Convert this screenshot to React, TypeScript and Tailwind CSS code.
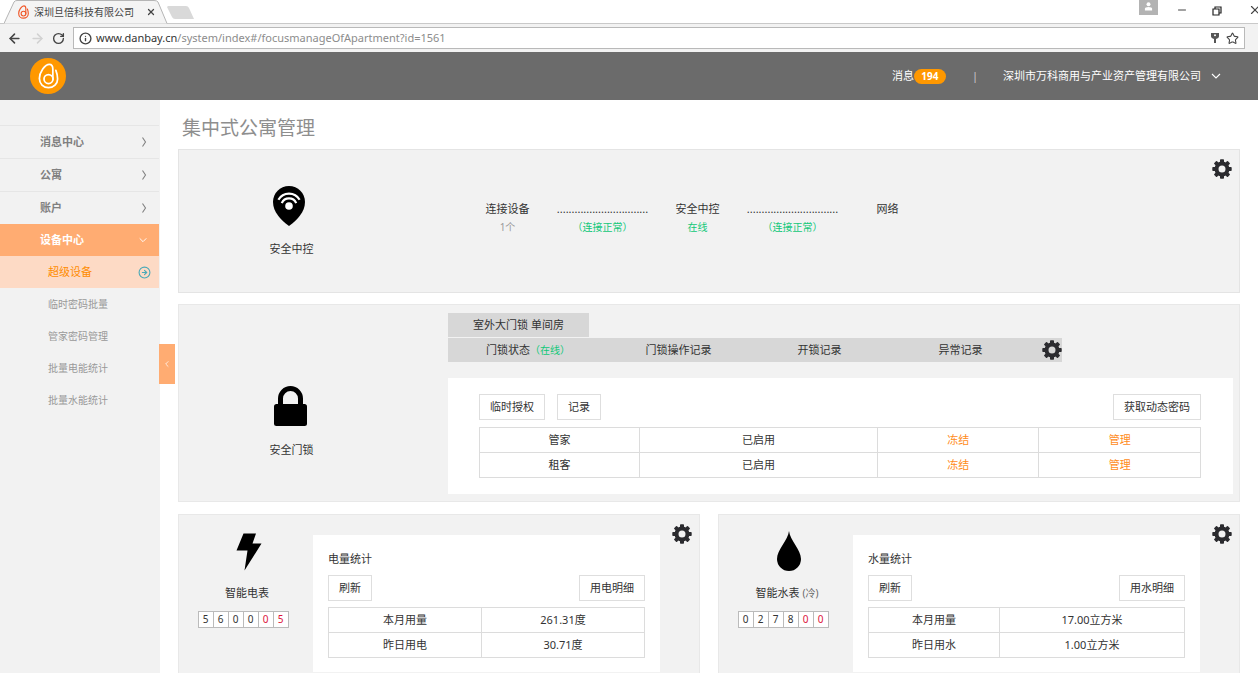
import React from 'react';
import { ArrowLeft, ArrowRight, RotateCw, Info, Star, X, Minus, CircleArrowRight } from 'lucide-react';

const menu = ['消息中心', '公寓', '账户'];
const subMenu = ['临时密码批量', '管家密码管理', '批量电能统计', '批量水能统计'];
const dots = '.'.repeat(31);

const links = [
  { name: '连接设备', note: '1个', ok: false },
  { name: dots, note: '（连接正常）', ok: true },
  { name: '安全中控', note: '在线', ok: true },
  { name: dots, note: '（连接正常）', ok: true },
  { name: '网络', note: '', ok: false },
];

const Logo: React.FC<{ className: string; width: number }> = ({ className, width }) => (
  <svg viewBox="0 0 24 30" className={className} fill="none" stroke="currentColor" strokeWidth={width} strokeLinecap="round">
    <path d="M17 19V7C17 3.500 15.500 1.500 13 1.500C8 1.500 1.500 10.500 1.500 18C1.500 24 6 28.500 12 28.500C18 28.500 22.500 24 22.500 18.500C22.500 14.500 21.500 11 20.500 8.500" />
    <circle cx="12" cy="18.500" r="5.200" />
  </svg>
);

const Gear: React.FC = () => (
  <svg viewBox="0 0 20 20" className="w-5 h-5 text-[#2b2b2f]" fill="currentColor">
    <circle cx="10" cy="10" r="5.500" fill="none" stroke="currentColor" strokeWidth="4" />
    {[0, 45, 90, 135, 180, 225, 270, 315].map((deg) => (
      <rect key={deg} x="8" y="0.300" width="4" height="4" rx="0.800" transform={`rotate(${deg} 10 10)`} />
    ))}
  </svg>
);

const GearButton: React.FC = () => (
  <button aria-label="设置" className="absolute top-[9px] right-[7px]"><Gear /></button>
);

const Chevron: React.FC<{ dir: 'right' | 'down' | 'left'; className: string }> = ({ dir, className }) => {
  const d = { right: 'M4.500 1.500L7.500 6L4.500 10.500', down: 'M2 4L6 8L10 4', left: 'M8 2L4 6L8 10' }[dir];
  return (
    <svg viewBox="0 0 12 12" className={className} fill="none" stroke="currentColor" strokeWidth="1.100"><path d={d} /></svg>
  );
};

const PinIcon: React.FC = () => (
  <svg viewBox="0 0 32 40" className="w-8 h-10">
    <path d="M16 0C7 0 0 7 0 16C0 26 8 34 16 40C24 34 32 26 32 16C32 7 25 0 16 0Z" />
    <circle cx="16" cy="20" r="3.800" fill="#fff" />
    <path d="M8.800 17.200A7.800 7.800 0 0 1 23.200 17.200M5.400 13.800A12.200 12.200 0 0 1 26.600 13.800" fill="none" stroke="#fff" strokeWidth="2.200" />
  </svg>
);

const LockIcon: React.FC = () => (
  <svg viewBox="0 0 33 40" className="w-[33px] h-10">
    <rect y="18" width="33" height="22" rx="2.500" />
    <path d="M6.500 20V12.500A10 10 0 0 1 26.500 12.500V20" fill="none" stroke="#000" strokeWidth="5" />
  </svg>
);

const BoltIcon: React.FC = () => (
  <svg viewBox="0 0 26 40" className="w-[26px] h-10">
    <path d="M7.500 2.500H20L16.500 12.500H25.500L8.500 39.500L11.500 19.500H0.500Z" />
  </svg>
);

const DropIcon: React.FC = () => (
  <svg viewBox="0 0 24 40" className="w-6 h-10">
    <path d="M12 0C11 9 0 19 0 28A12 12 0 0 0 24 28C24 19 13 9 12 0Z" />
  </svg>
);

const Btn: React.FC<{ children: React.ReactNode }> = ({ children }) => (
  <button className="h-[26px] px-[10px] border border-[#dedede] bg-white">{children}</button>
);

const cell = 'border border-[#dcdcdc] text-center p-0';

interface MeterProps {
  icon: React.ReactNode;
  label: React.ReactNode;
  digits: string;
  title: string;
  detail: string;
  rows: string[][];
  split: string;
}

const Meter: React.FC<MeterProps> = ({ icon, label, digits, title, detail, rows, split }) => (
  <section className="relative flex items-start border border-[#e8e8e8] bg-[#f2f2f2] pt-5 pr-[39px] pb-5">
    <div className="w-[134px] shrink-0 -mt-1 flex flex-col items-center">
      <div className="pl-[6px]">{icon}</div>
      <div className="pl-[2px] mt-[14px] leading-4">{label}</div>
      <div className="mt-[10px] mr-[6px] flex gap-px border border-[#bbb] bg-[#bbb]">
        {digits.split('').map((d, i) => (
          <span key={i} className={`w-[14px] h-[15px] leading-[15px] bg-white text-center text-[10px] ${i > 3 ? 'text-[#dc143c]' : ''}`}>{d}</span>
        ))}
      </div>
    </div>
    <div className="flex-1 bg-white px-[15px] pt-4 pb-[14px]">
      <h3 className="leading-4">{title}</h3>
      <div className="mt-2 flex justify-between">
        <Btn>刷新</Btn>
        <Btn>{detail}</Btn>
      </div>
      <table className="mt-[6px] w-full table-fixed border-collapse">
        <tbody>
          {rows.map(([k, v]) => (
            <tr key={k} className="h-[25px]">
              <td className={`${cell} ${split}`}>{k}</td>
              <td className={cell}>{v}</td>
            </tr>
          ))}
        </tbody>
      </table>
    </div>
    <GearButton />
  </section>
);

const Browser: React.FC = () => (
  <div className="shrink-0 text-[#444]">
    <div className="h-[23px] flex items-start bg-white">
      <div className="relative ml-1 w-[164px] h-6 pl-[14px] pr-3 flex items-center">
        <svg viewBox="0 0 164 24" className="absolute inset-0 w-full h-full" fill="#f4f4f4" stroke="#b5b5b5">
          <path d="M0 23.500L10 2Q11 0.500 13 0.500H150Q153 0.500 154 2L163 23.500" />
        </svg>
        <Logo className="relative w-[11px] h-[14px] text-[#f0582a]" width={2.5} />
        <span className="relative ml-[5px] flex-1 text-[10px] whitespace-nowrap">深圳旦倍科技有限公司</span>
        <button aria-label="关闭标签页" className="relative"><X className="w-[10px] h-[10px]" strokeWidth={3} /></button>
      </div>
      <button aria-label="新标签页" className="mt-[6px] -ml-[2px]">
        <svg viewBox="0 0 28 14" className="w-7 h-[14px]" fill="#d9d9d9"><path d="M2 0H20Q22 0 23 2L28 13H9Q7 13 6 11L1 1Z" /></svg>
      </button>
      <div className="ml-auto flex items-start">
        <button aria-label="用户" className="w-[19px] h-[15px] flex justify-center bg-[#b3b3b3]">
          <svg viewBox="0 0 10 12" className="w-[9px] h-3" fill="#fff"><circle cx="5" cy="4" r="2.200" /><path d="M1 11V9Q1 7 5 7Q9 7 9 9V11Z" /></svg>
        </button>
        <button aria-label="最小化" className="ml-[18px] mt-1"><Minus className="w-3 h-3" /></button>
        <button aria-label="还原" className="ml-6 mt-[6px]">
          <svg viewBox="0 0 10 10" className="w-[10px] h-[10px]" fill="none" stroke="#222" strokeWidth="1.200"><path d="M1 3H7V9H1ZM3 3V1H9V7H7" /></svg>
        </button>
        <button aria-label="关闭" className="ml-[26px] -mr-1 mt-[3px]"><X className="w-[14px] h-[14px]" strokeWidth={2} /></button>
      </div>
    </div>
    <div className="h-[29px] flex items-center border-t border-[#c9c9c9] bg-[#f2f2f2] pl-[7px] pr-[13px]">
      <button aria-label="后退"><ArrowLeft className="w-[15px] h-[15px]" strokeWidth={2.5} /></button>
      <button aria-label="前进" className="ml-2 text-[#d2d2d2]"><ArrowRight className="w-[15px] h-[15px]" strokeWidth={2.5} /></button>
      <button aria-label="刷新" className="ml-[7px]"><RotateCw className="w-[13px] h-[13px]" strokeWidth={2.5} /></button>
      <div className="ml-2 flex-1 h-[22px] flex items-center border border-[#b9b9b9] bg-white pl-[5px] pr-[5px]">
        <Info className="w-[13px] h-[13px]" strokeWidth={2.5} />
        <span className="ml-1 text-[11px] text-[#8c8c8c]"><span className="text-[#333]">www.danbay.cn</span>/system/index#/focusmanageOfApartment?id=1561</span>
        <svg viewBox="0 0 10 12" className="ml-auto w-[10px] h-3" fill="#555"><path d="M1 1H9V4.500Q9 6 6 7V11H4V7Q1 6 1 4.500Z" /><circle cx="5" cy="3.200" r="1" fill="#fff" /></svg>
        <button aria-label="收藏" className="ml-[6px]"><Star className="w-[13px] h-[13px]" /></button>
      </div>
    </div>
  </div>
);

const App: React.FC = () => {
  return (
    <div className="h-screen overflow-hidden flex flex-col bg-white text-[11px] leading-4 text-[#333] font-['Noto_Sans','Noto_Sans_CJK_SC',sans-serif]">
      <Browser />

      <header className="h-12 shrink-0 flex items-center bg-[#6b6b6b] text-white pl-[30px] pr-9">
        <a href="#" aria-label="首页" className="w-9 h-9 rounded-full bg-[#ff9800] flex items-center justify-center">
          <Logo className="w-[21px] h-[26px] text-white" width={2} />
        </a>
        <a href="#" className="ml-auto flex items-center">
          消息<span className="h-[15px] w-8 rounded-full bg-[#ff9800] text-center leading-[15px] text-[10px] font-bold">194</span>
        </a>
        <span className="ml-[26px] text-[#ccc]">|</span>
        <button className="ml-[25px] flex items-center gap-[9px]">
          深圳市万科商用与产业资产管理有限公司
          <Chevron dir="down" className="w-3 h-3" />
        </button>
      </header>

      <div className="flex-1 min-h-0 flex">
        <aside className="relative w-40 shrink-0 bg-[#f2f2f2] pt-[25px]">
          <nav className="mr-px">
            {menu.map((m) => (
              <a key={m} href="#" className="h-[33px] flex items-center justify-between border-t border-[#e6e6e6] pl-10 pr-[9px] font-bold text-[#808080]">
                {m}
                <Chevron dir="right" className="w-3 h-3" />
              </a>
            ))}
            <a href="#" className="h-8 flex items-center justify-between bg-[#ffac72] pl-10 pr-[11px] font-bold text-white">
              设备中心
              <Chevron dir="down" className="w-[10px] h-[10px]" />
            </a>
            <a href="#" className="h-8 flex items-center justify-between bg-[#fddac5] pl-12 pr-2 text-[#ff8c00]">
              超级设备
              <CircleArrowRight className="w-[13px] h-[13px] text-[#4aa9b8]" strokeWidth={2} />
            </a>
            {subMenu.map((m) => (
              <a key={m} href="#" className="h-8 flex items-center pl-12 text-[10px] text-[#999]">{m}</a>
            ))}
          </nav>
          <button aria-label="收起菜单" className="absolute left-[159px] top-[244px] w-4 h-10 flex items-center justify-center bg-[#ffac72] text-white">
            <Chevron dir="left" className="w-2 h-2" />
          </button>
        </aside>

        <main className="flex-1 min-w-0 overflow-hidden px-[18px]">
          <h1 className="h-[49px] pt-[6px] pl-1 flex items-center text-[19px] font-normal text-[#8e8e8e]">集中式公寓管理</h1>

          <section className="relative h-36 flex border border-[#e4e4e4] bg-[#f2f2f2]">
            <div className="w-[225px] pt-9 flex flex-col items-center">
              <div className="pr-[5px]"><PinIcon /></div>
              <div className="mt-[15px]">安全中控</div>
            </div>
            <div className="ml-[56px] pt-[51px] grid grid-cols-[repeat(5,95px)] content-start text-center">
              {links.map((l, i) => (
                <div key={i}>
                  <div>{l.name}</div>
                  <div className={`mt-[2px] text-[10px] ${l.ok ? 'text-[#10c878]' : 'text-[#999]'}`}>{l.note}</div>
                </div>
              ))}
            </div>
            <GearButton />
          </section>

          <section className="mt-[11px] flex border border-[#e8e8e8] bg-[#f2f2f2] pt-2 pr-[6px] pb-[7px]">
            <div className="w-[225px] shrink-0 pt-[73px] flex flex-col items-center">
              <div className="pr-[3px]"><LockIcon /></div>
              <div className="mt-4">安全门锁</div>
            </div>
            <div className="ml-[44px] flex-1">
              <button className="block w-[141px] h-6 bg-[#d7d7d7]">室外大门锁 单间房</button>
              <div className="mt-px h-6 w-[614px] flex items-center bg-[#d7d7d7]">
                <button className="w-40">门锁状态<span className="text-[10px] text-[#10c878]">（在线）</span></button>
                <button className="w-[141px]">门锁操作记录</button>
                <button className="w-[141px]">开锁记录</button>
                <button className="w-[141px]">异常记录</button>
                <button aria-label="设置" className="ml-auto"><Gear /></button>
              </div>
              <div className="mt-4 bg-white pl-[31px] pr-8 pt-4 pb-4">
                <div className="flex gap-3">
                  <Btn>临时授权</Btn>
                  <Btn>记录</Btn>
                  <div className="ml-auto"><Btn>获取动态密码</Btn></div>
                </div>
                <table className="mt-[7px] w-full table-fixed border-collapse">
                  <tbody>
                    {['管家', '租客'].map((who) => (
                      <tr key={who} className="h-[25px]">
                        <td className={`${cell} w-[160px]`}>{who}</td>
                        <td className={`${cell} w-[33%]`}>已启用</td>
                        <td className={cell}><a href="#" className="text-[#ff8c1a]">冻结</a></td>
                        <td className={cell}><a href="#" className="text-[#ff8c1a]">管理</a></td>
                      </tr>
                    ))}
                  </tbody>
                </table>
              </div>
            </div>
          </section>

          <div className="mt-3 grid grid-cols-2 gap-[18px]">
            <Meter
              icon={<BoltIcon />}
              label="智能电表"
              digits="560005"
              title="电量统计"
              detail="用电明细"
              rows={[['本月用量', '261.31度'], ['昨日用电', '30.71度']]}
              split="w-[153px]"
            />
            <Meter
              icon={<DropIcon />}
              label={<>智能水表 <span className="text-[10px] text-[#666]">(冷)</span></>}
              digits="027800"
              title="水量统计"
              detail="用水明细"
              rows={[['本月用量', '17.00立方米'], ['昨日用水', '1.00立方米']]}
              split="w-[131px]"
            />
          </div>
        </main>
      </div>
    </div>
  );
};

export default App;
